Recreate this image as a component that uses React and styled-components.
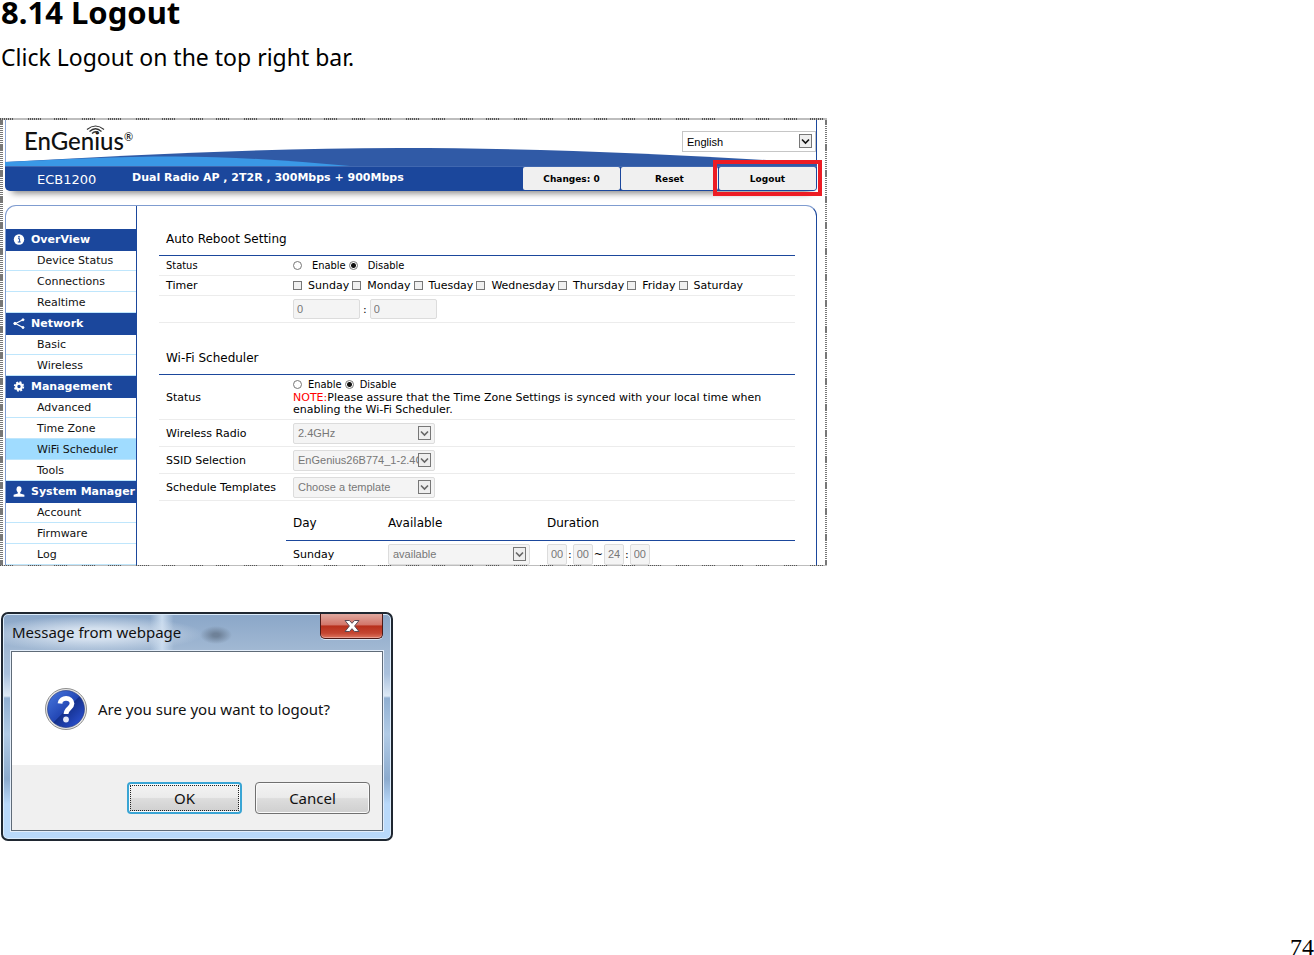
import React, {useState} from "react";
import styled, {createGlobalStyle} from "styled-components";

const NAVY = "#1b479c";
const UI_FONT = `"DejaVu Sans", Verdana, sans-serif`;
const NARROW_FONT = `"DejaVu Sans Condensed", "DejaVu Sans", sans-serif`;
const FIELD_FONT = `"Liberation Sans", Arial, sans-serif`;
const DOC_FONT = `"Noto Sans", "Open Sans", sans-serif`;

const GlobalStyle = createGlobalStyle`
    *, *::before, *::after {
        box-sizing: border-box;
    }
    body {
        margin: 0;
        background: #fff;
        color: #000;
    }
`;

const Page = styled.main`
    display: flex;
    flex-direction: column;
    min-height: 100vh;
    overflow: hidden;
    font-family: ${DOC_FONT};
`;

const Title = styled.h1`
    margin: 0;
    padding-left: 1px;
    font-size: 31px;
    line-height: 25px;
    font-weight: 700;
`;

const Lead = styled.p`
    margin: 16px 0 45px;
    padding-left: 1px;
    font-size: 23px;
    line-height: 32px;
`;

const PageNumber = styled.footer`
    margin-top: auto;
    text-align: right;
    font-family: "Liberation Serif", "Times New Roman", serif;
    font-size: 24px;
    line-height: 16px;
`;

/* ---------- router admin page ---------- */

const Frame = styled.section`
    width: 100%;
    max-width: 827px;
    padding: 2px 10px 1px 5px;
    font-family: ${UI_FONT};
    font-size: 11px;
    background:
        repeating-linear-gradient(90deg, transparent 0 14px, #bdbdbd 14px 27px) 0 0 / 100% 2px no-repeat,
        repeating-linear-gradient(90deg, #555 0 1px, #bbb 1px 2px) 0 0 / 100% 2px no-repeat,
        repeating-linear-gradient(90deg, transparent 0 14px, #bdbdbd 14px 27px) 0 100% / 100% 1px no-repeat,
        repeating-linear-gradient(90deg, #555 0 1px, #bbb 1px 2px) 0 100% / 100% 1px no-repeat,
        repeating-linear-gradient(180deg, #777 0 6px, transparent 6px 26px) 0 0 / 3px 100% no-repeat,
        repeating-linear-gradient(180deg, #777 0 1px, #fff 1px 2px) 0 0 / 3px 100% no-repeat,
        repeating-linear-gradient(180deg, #777 0 6px, transparent 6px 26px) 100% 0 / 2px 100% no-repeat,
        repeating-linear-gradient(180deg, #777 0 1px, #fff 1px 2px) 100% 0 / 2px 100% no-repeat;
`;

const Header = styled.header`
    position: relative;
    display: flex;
    justify-content: space-between;
    align-items: flex-start;
    height: 46px;
    padding-left: 18px;
    border-left: 1px solid #8ba6d6;
    border-right: 1px solid ${NAVY};
`;

const Swoosh = styled.svg`
    position: absolute;
    left: -1px;
    bottom: 0;
    width: calc(100% + 2px);
    height: 19px;
`;

const Logo = styled.div`
    position: relative;
    display: flex;
    align-items: flex-start;
    padding-top: 6px;
    font-family: Lato, sans-serif;
    font-size: 24px;
    font-weight: 500;
    line-height: 30px;
    color: #111;

    sup {
        font-size: 11px;
        line-height: 22px;
    }

    svg {
        position: absolute;
        left: 62px;
        top: 5px;
    }
`;

const SelectWrap = styled.span`
    position: relative;
    display: inline-flex;
    width: ${p => p.$width}px;
    margin-top: ${p => p.$top || 0}px;

    svg {
        position: absolute;
        right: 4px;
        top: 3px;
        width: 13px;
        height: 14px;
        pointer-events: none;
        color: ${p => (p.$muted ? "#666" : "#111")};
        background: #eee;
        border: 1px solid #777;
    }
`;

const Select = styled.select`
    appearance: none;
    width: 100%;
    height: 21px;
    margin: 0;
    padding: 0 16px 0 4px;
    font-family: ${FIELD_FONT};
    font-size: 11px;
    color: #000;
    background: #fff;
    border: 1px solid #c6c6c6;
    border-radius: 0;
    opacity: 1;

    &:disabled {
        color: #777;
        background: #f4f4f4;
        border-color: #dcdcdc;
        border-radius: 2px;
    }
`;

const Bar = styled.div`
    display: flex;
    align-items: center;
    height: 25px;
    color: #fff;
    background: ${NAVY};
    border-top: 1px solid #4168b0;
    border-radius: 0 0 4px 5px;
    box-shadow: 0 9px 7px -7px rgba(0, 0, 0, .5);
`;

const Model = styled.span`
    width: 127px;
    padding-left: 32px;
    font-size: 13px;
`;

const Product = styled.strong`
    flex: 1;
    font-size: 11px;
    line-height: 16px;
    padding-bottom: 3px;
    white-space: nowrap;
`;

const Actions = styled.nav`
    display: flex;
    align-self: flex-start;
    gap: 1px;
    padding-right: 1px;
`;

const Action = styled.button`
    position: relative;
    width: 97px;
    height: 23px;
    padding: 0;
    font-family: ${UI_FONT};
    font-size: 9px;
    font-weight: 700;
    color: #000;
    background: #f0f0f0;
    border: 0;
    border-radius: 2px;
`;

const Highlight = styled.span`
    position: absolute;
    inset: -7px -6px -6px;
    border: 4px solid #ed1c24;
`;

const Panel = styled.div`
    display: flex;
    margin-top: 14px;
    border: 1px solid #7f9cd0;
    border-right-color: ${NAVY};
    border-bottom: 0;
    border-radius: 11px 11px 0 0;
`;

const Sidebar = styled.nav`
    flex: none;
    width: 131px;
    padding-top: 23px;
    border-right: 1px solid ${NAVY};
`;

const GroupTitle = styled.h2`
    display: flex;
    align-items: center;
    gap: 6px;
    height: 21px;
    margin: 0;
    padding-left: 7px;
    font-size: 11px;
    font-weight: 700;
    white-space: nowrap;
    color: #fff;
    background: ${NAVY};
    box-shadow: 0 1px ${NAVY};

    svg {
        flex: none;
    }
`;

const MenuList = styled.ul`
    margin: 0;
    padding: 0;
    list-style: none;
`;

const MenuLink = styled.a`
    display: block;
    height: 21px;
    padding-left: 31px;
    line-height: 21px;
    color: #111;
    text-decoration: none;
    background: ${p => (p.$active ? "#a0dcff" : "none")};
    border-bottom: 1px solid #bfe6fc;
`;

const Content = styled.div`
    flex: 1;
    min-width: 0;
    padding: 0 21px 0 22px;
`;

const SectionTitle = styled.h2`
    margin: 0;
    padding: ${p => p.$top}px 7px 8px;
    font-size: 12px;
    line-height: 16px;
    font-weight: 400;
    border-bottom: 1px solid ${NAVY};
`;

const Row = styled.div`
    display: flex;
    align-items: center;
    min-height: ${p => p.$height}px;
    border-bottom: 1px solid #ececec;
`;

const RowLabel = styled.div`
    flex: none;
    width: 134px;
    padding-left: 7px;
    font-family: ${p => (p.$narrow ? NARROW_FONT : UI_FONT)};
`;

const RowBody = styled.div`
    display: flex;
    flex-wrap: wrap;
    align-items: center;
    gap: ${p => p.$gap || 3}px;
`;

const Choice = styled.label`
    display: inline-flex;
    align-items: center;
    gap: ${p => p.$gap || 6}px;
    line-height: 12px;
    font-family: ${p => (p.$narrow ? NARROW_FONT : UI_FONT)};
`;

const Radio = styled.input.attrs({type: "radio"})`
    appearance: none;
    width: 9px;
    height: 9px;
    margin: 0;
    border: 1px solid #777;
    border-radius: 50%;

    &:checked {
        background: radial-gradient(circle, #111 0 2px, #fff 3px);
    }
`;

const Checkbox = styled.input.attrs({type: "checkbox"})`
    appearance: none;
    width: 9px;
    height: 9px;
    margin: 0;
    background: #f0f0f0;
    border: 1px solid #777;
`;

const TextField = styled.input.attrs({type: "text"})`
    width: ${p => p.$width}px;
    height: ${p => p.$height || 20}px;
    padding: 0 3px;
    font-family: ${FIELD_FONT};
    font-size: 11px;
    color: #777;
    background: #f4f4f4;
    border: 1px solid #dcdcdc;
    border-radius: 2px;
`;

const Note = styled.p`
    margin: 0;
    max-width: 490px;
    font-size: 11px;
    line-height: 12px;

    em {
        font-style: normal;
        color: #f00;
    }
`;

const StatusBody = styled.div`
    display: flex;
    flex-direction: column;
    gap: 1px;
`;

const ScheduleTable = styled.table`
    width: calc(100% - 127px);
    margin-left: 127px;
    border-collapse: collapse;
    table-layout: fixed;

    th {
        height: 39px;
        padding: 5px 7px 0;
        font-size: 12px;
        font-weight: 400;
        text-align: left;
        border-bottom: 1px solid ${NAVY};
    }

    td {
        height: 24px;
        padding: 3px 7px 0;
        white-space: nowrap;
    }
`;

/* ---------- confirm dialog ---------- */

const Dialog = styled.section`
    width: 100%;
    max-width: 392px;
    margin: 46px 0 0 1px;
    padding: 0 8px 8px;
    font-family: ${DOC_FONT};
    font-size: 15px;
    color: #111;
    background:
        radial-gradient(ellipse 16px 9px at 213px 21px, #6f8299 20%, transparent 100%),
        radial-gradient(ellipse 110px 18px at 90px 20px, #d5e1ef 30%, transparent 100%),
        linear-gradient(90deg, transparent 38%, #c9dbee 41%, transparent 44%) 0 0 / 100% 39px no-repeat,
        linear-gradient(180deg, #8aa6c8 0, #a3bad4 39px, #a9c0dc 60px, #dde9f5 82px, #90afd1 84px, #b1cbe6 120px, #8cabce 165px, #b9d9fa 190px, #b9d9fa 100%);
    border: 2px solid #1f2731;
    border-radius: 7px;
    box-shadow: inset 0 0 0 1px #dcecfb;
`;

const TitleBar = styled.div`
    display: flex;
    justify-content: space-between;
    align-items: flex-start;
    height: 37px;
    padding-left: 1px;
    line-height: 36px;
`;

const CloseButton = styled.button`
    width: 63px;
    height: 25px;
    margin: 0;
    padding: 0;
    line-height: 0;
    background: linear-gradient(#e0a89f 0, #d3766a 45%, #b8301c 50%, #c44632 80%, #dd7660 100%);
    border: 1px solid #4c1a18;
    border-top: 0;
    border-radius: 0 0 5px 5px;
    box-shadow: inset 0 -1px #eaa093, 0 1px #d9e7f5;
`;

const DialogBody = styled.div`
    border: 1px solid #5f6b78;
    box-shadow: 0 0 0 1px #e4eefa;
    background: #f0f0f0;
`;

const Message = styled.div`
    display: flex;
    align-items: center;
    gap: 10px;
    height: 113px;
    padding-left: 32px;
    background: #fff;
`;

const ButtonRow = styled.div`
    display: flex;
    justify-content: flex-end;
    gap: 13px;
    padding: 17px 12px 16px;
`;

const DialogButton = styled.button`
    width: 115px;
    height: 32px;
    padding: 0;
    font-family: ${DOC_FONT};
    font-size: 15px;
    color: #111;
    background: linear-gradient(#f3f3f3 0, #ebebeb 48%, #dddddd 52%, #cfcfcf 100%);
    border: ${p => (p.$primary ? "2px solid #3aa5d4" : "1px solid #707070")};
    border-radius: 4px;
    box-shadow: inset 0 0 0 1px #fafafa;
    outline: ${p => (p.$primary ? "1px dotted #222" : "none")};
    outline-offset: -4px;
`;

function InfoIcon() {
    return (
        <svg width="12" height="12" viewBox="0 0 12 12">
            <circle cx="6" cy="5.5" r="5.2" fill="#fff"/>
            <path d="M5 4.7h1.6v3.2M4.8 8h2.9" stroke={NAVY} fill="none"/>
            <circle cx="6" cy="2.8" r=".9" fill={NAVY}/>
        </svg>
    );
}

function ShareIcon() {
    return (
        <svg width="12" height="12" viewBox="0 0 12 12" fill="#fff" stroke="#fff">
            <path d="M10 1.7 2.5 5.5 10 9.5" fill="none" strokeWidth="1.2"/>
            <circle cx="10" cy="1.8" r="1"/>
            <circle cx="2" cy="5.5" r="1.2"/>
            <circle cx="10" cy="9.5" r="1"/>
        </svg>
    );
}

function GearIcon() {
    return (
        <svg width="12" height="12" viewBox="0 0 12 12">
            <circle cx="6" cy="5.5" r="2.8" fill="none" stroke="#fff" strokeWidth="2.2"/>
            <circle cx="6" cy="5.5" r="4.3" fill="none" stroke="#fff" strokeWidth="1.8" strokeDasharray="1.9 1.48"/>
        </svg>
    );
}

function UserIcon() {
    return (
        <svg width="12" height="12" viewBox="0 0 12 12" fill="#fff">
            <ellipse cx="6" cy="3.3" rx="2.5" ry="3.1"/>
            <path d="M4.8 5h2.4v2.4l4.2 1.4v2H.6v-2l4.2-1.4z"/>
        </svg>
    );
}

const MENU = [
    {title: "OverView", icon: <InfoIcon/>, items: ["Device Status", "Connections", "Realtime"]},
    {title: "Network", icon: <ShareIcon/>, items: ["Basic", "Wireless"]},
    {title: "Management", icon: <GearIcon/>, items: ["Advanced", "Time Zone", "WiFi Scheduler", "Tools"]},
    {title: "System Manager", icon: <UserIcon/>, items: ["Account", "Firmware", "Log"]},
];

const DAYS = ["Sunday", "Monday", "Tuesday", "Wednesday", "Thursday", "Friday", "Saturday"];

function DropDown({label, value, width, top, disabled}) {
    return (
        <SelectWrap $width={width} $top={top} $muted={disabled}>
            <Select aria-label={label} disabled={disabled} defaultValue={value}>
                <option>{value}</option>
            </Select>
            <svg viewBox="0 0 11 12">
                <path d="M2 4.5 5.5 8 9 4.5" fill="none" stroke="currentColor" strokeWidth="1.6"/>
            </svg>
        </SelectWrap>
    );
}

function StatusRadios({name, gap}) {
    const [status, setStatus] = useState("Disable");

    return (
        <RowBody>
            {["Enable", "Disable"].map(option => (
                <Choice key={option} $gap={gap} $narrow>
                    <Radio name={name} checked={status === option} onChange={() => setStatus(option)}/>
                    {option}
                </Choice>
            ))}
        </RowBody>
    );
}

function SideMenu() {
    return (
        <Sidebar>
            {MENU.map(group => (
                <div key={group.title}>
                    <GroupTitle>{group.icon}{group.title}</GroupTitle>
                    <MenuList>
                        {group.items.map(item => (
                            <li key={item}>
                                <MenuLink href="#" $active={item === "WiFi Scheduler"}>{item}</MenuLink>
                            </li>
                        ))}
                    </MenuList>
                </div>
            ))}
        </Sidebar>
    );
}

function AdminPage() {
    return (
        <Frame>
            <Header>
                <Swoosh viewBox="0 0 812 19" preserveAspectRatio="none">
                    <path d="M0 15C130 8 260 1 395 1C540 1 680 8 812 16V19H0Z" fill="#305aa6"/>
                    <path d="M0 15C60 12 110 9.500 170 9.500C230 9.500 290 14 345 19H0Z" fill="#3a98e6"/>
                </Swoosh>
                <Logo>
                    EnGenius<sup>®</sup>
                    <svg width="19" height="11" viewBox="0 0 19 11" fill="none" stroke="#333" strokeWidth="1.2">
                        <path d="M1 4.500Q9.500 -2.500 18 4.500M3.500 6.500Q9.500 1 15.500 6.500M6 8.500Q9.500 5 13 8.500"/>
                    </svg>
                </Logo>
                <DropDown label="Language" value="English" width={134} top={11}/>
            </Header>
            <Bar>
                <Model>ECB1200</Model>
                <Product>Dual Radio AP , 2T2R , 300Mbps + 900Mbps</Product>
                <Actions>
                    <Action type="button">Changes: 0</Action>
                    <Action type="button">Reset</Action>
                    <Action type="button">Logout<Highlight/></Action>
                </Actions>
            </Bar>
            <Panel>
                <SideMenu/>
                <Content>
                    <SectionTitle $top={25}>Auto Reboot Setting</SectionTitle>
                    <Row $height={20}>
                        <RowLabel $narrow>Status</RowLabel>
                        <StatusRadios name="reboot" gap={10}/>
                    </Row>
                    <Row $height={20}>
                        <RowLabel>Timer</RowLabel>
                        <RowBody>
                            {DAYS.map(day => (
                                <Choice key={day}><Checkbox/>{day}</Choice>
                            ))}
                        </RowBody>
                    </Row>
                    <Row $height={27}>
                        <RowLabel/>
                        <RowBody>
                            <TextField $width={67} defaultValue="0" aria-label="Hour"/>
                            :
                            <TextField $width={67} defaultValue="0" aria-label="Minute"/>
                        </RowBody>
                    </Row>
                    <SectionTitle $top={27}>Wi-Fi Scheduler</SectionTitle>
                    <Row $height={45}>
                        <RowLabel>Status</RowLabel>
                        <StatusBody>
                            <StatusRadios name="scheduler" gap={6}/>
                            <Note>
                                <em>NOTE:</em>Please assure that the Time Zone Settings is synced with your local
                                time when enabling the Wi-Fi Scheduler.
                            </Note>
                        </StatusBody>
                    </Row>
                    <Row $height={27}>
                        <RowLabel>Wireless Radio</RowLabel>
                        <DropDown label="Wireless Radio" value="2.4GHz" width={142} disabled/>
                    </Row>
                    <Row $height={27}>
                        <RowLabel>SSID Selection</RowLabel>
                        <DropDown label="SSID Selection" value="EnGenius26B774_1-2.4GHz" width={142} disabled/>
                    </Row>
                    <Row $height={27}>
                        <RowLabel>Schedule Templates</RowLabel>
                        <DropDown label="Schedule Templates" value="Choose a template" width={142} disabled/>
                    </Row>
                    <ScheduleTable>
                        <colgroup>
                            <col width="95"/>
                            <col width="159"/>
                            <col/>
                        </colgroup>
                        <thead>
                            <tr>
                                <th>Day</th>
                                <th>Available</th>
                                <th>Duration</th>
                            </tr>
                        </thead>
                        <tbody>
                            <tr>
                                <td>Sunday</td>
                                <td><DropDown label="Sunday availability" value="available" width={142} disabled/></td>
                                <td>
                                    <RowBody $gap={1}>
                                        <TextField $width={20} $height={21} defaultValue="00" aria-label="Start hour"/>
                                        :
                                        <TextField $width={20} $height={21} defaultValue="00" aria-label="Start minute"/>
                                        ~
                                        <TextField $width={20} $height={21} defaultValue="24" aria-label="End hour"/>
                                        :
                                        <TextField $width={20} $height={21} defaultValue="00" aria-label="End minute"/>
                                    </RowBody>
                                </td>
                            </tr>
                        </tbody>
                    </ScheduleTable>
                </Content>
            </Panel>
        </Frame>
    );
}

function ConfirmDialog() {
    return (
        <Dialog role="dialog" aria-label="Message from webpage">
            <TitleBar>
                <span>Message from webpage</span>
                <CloseButton type="button" aria-label="Close">
                    <svg width="16" height="14" viewBox="0 0 16 14">
                        <path
                            d="M1 1.500h4.500L8 4.300l2.500-2.800H15L10.600 7l4.400 5.500h-4.500L8 9.700l-2.500 2.800H1L5.400 7z"
                            fill="#fff" stroke="#5a4a55"
                        />
                    </svg>
                </CloseButton>
            </TitleBar>
            <DialogBody>
                <Message>
                    <svg width="44" height="44" viewBox="0 0 44 44">
                        <defs>
                            <linearGradient id="ball" x1="0" y1="0" x2="1" y2="1">
                                <stop offset="0" stopColor="#4a7ae0"/>
                                <stop offset=".5" stopColor="#2347b5"/>
                                <stop offset=".52" stopColor="#14308c"/>
                                <stop offset="1" stopColor="#3058e0"/>
                            </linearGradient>
                        </defs>
                        <circle cx="22" cy="22" r="20.500" fill="#e6e6e6" stroke="#8f8f8f"/>
                        <circle cx="22" cy="22" r="18.500" fill="url(#ball)" stroke="#1b2f78" strokeWidth=".6"/>
                        <path
                            d="M16 16.500C16.500 9.500 28 10 28 16.500C28 21 22 21.500 22 27"
                            fill="none" stroke="#fff" strokeWidth="4.800"
                        />
                        <circle cx="22" cy="32.500" r="2.900" fill="#e4e8f8"/>
                    </svg>
                    Are you sure you want to logout?
                </Message>
                <ButtonRow>
                    <DialogButton type="button" $primary>OK</DialogButton>
                    <DialogButton type="button">Cancel</DialogButton>
                </ButtonRow>
            </DialogBody>
        </Dialog>
    );
}

export default function App() {
    return (
        <Page>
            <GlobalStyle/>
            <Title>8.14 Logout</Title>
            <Lead>Click Logout on the top right bar.</Lead>
            <AdminPage/>
            <ConfirmDialog/>
            <PageNumber>74</PageNumber>
        </Page>
    );
}
